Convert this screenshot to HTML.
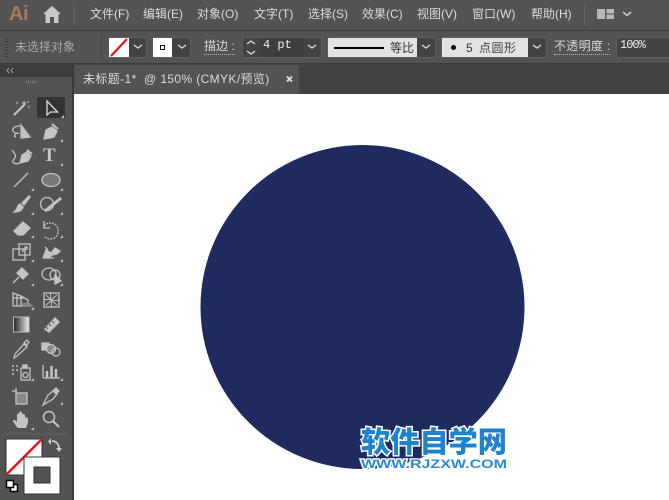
<!DOCTYPE html>
<html><head><meta charset="utf-8">
<style>
html,body{margin:0;padding:0;background:#fff}
#p{position:relative;width:669px;height:500px;overflow:hidden;background:#fff;font-family:"Liberation Sans","Noto Sans CJK SC",sans-serif}
#p div,#p span.a{position:absolute;box-sizing:border-box}
.m{top:6px;font-size:12px;line-height:16px;color:#dcdcdc;white-space:nowrap}
.l{font-size:12px;line-height:16px;color:#d8d8d8;white-space:nowrap}
.b{background:#434343;border:1px solid #5e5e5e;border-radius:3px}
</style></head><body><div id="p">
<div style="left:0;top:0;width:669px;height:30px;background:#535353"></div>
<div style="left:0;top:30px;width:669px;height:34px;background:#535353;border-top:1px solid #3c3c3c;border-bottom:1px solid #3a3a3a"></div>
<div style="left:0;top:64px;width:669px;height:30px;background:#424242"></div>
<div style="left:0;top:65px;width:72px;height:435px;background:#535353"></div>
<div style="left:0;top:65px;width:72px;height:12px;background:#3d3d3d"></div>
<div style="left:72px;top:64px;width:2px;height:436px;background:#3a3a3a"></div>
<div style="left:74px;top:65px;width:225px;height:29px;background:#535353"></div>
<div style="left:74px;top:94px;width:595px;height:406px;background:#fff"></div>

<div style="left:9px;top:-1px;font:bold 20px/30px 'Liberation Sans',sans-serif;color:#ab7858;letter-spacing:-0.5px">Ai</div>
<div style="left:74px;top:5px;width:1px;height:20px;background:#666"></div>
<div class="m" style="left:90px">文件(F)</div>
<div class="m" style="left:143px">编辑(E)</div>
<div class="m" style="left:197px">对象(O)</div>
<div class="m" style="left:254px">文字(T)</div>
<div class="m" style="left:308px">选择(S)</div>
<div class="m" style="left:362px">效果(C)</div>
<div class="m" style="left:417px">视图(V)</div>
<div class="m" style="left:472px">窗口(W)</div>
<div class="m" style="left:531px">帮助(H)</div>
<div style="left:584px;top:5px;width:1px;height:20px;background:#666"></div>

<div class="l" style="left:15px;top:39px;color:#a8a8a8">未选择对象</div>
<div style="left:101px;top:35px;width:1px;height:24px;background:#444"></div>

<div class="b" style="left:109px;top:37px;width:38px;height:21px"></div>
<div style="left:109px;top:38px;width:20px;height:19px;background:#fff"></div>
<div class="b" style="left:153px;top:37px;width:38px;height:21px"></div>
<div style="left:153px;top:38px;width:19px;height:19px;background:#fff"></div>
<div style="left:160px;top:45px;width:5px;height:5px;border:1px solid #111"></div>

<div class="l" style="left:204px;top:39px;border-bottom:1px dotted #bbb;line-height:15px">描边 :</div>
<div class="b" style="left:242px;top:37px;width:80px;height:21px"></div>
<div style="left:260px;top:38px;width:44px;height:19px;background:#3e3e3e"></div>
<div style="left:263px;top:38px;font:12px/15px 'Liberation Mono',monospace;color:#eee">4 pt</div>

<div class="b" style="left:327px;top:37px;width:109px;height:21px"></div>
<div style="left:328px;top:38px;width:89px;height:19px;background:#e3e3e3"></div>
<div style="left:334px;top:47px;width:50px;height:2px;background:#000"></div>
<div class="l" style="left:390px;top:40px;color:#333">等比</div>

<div class="b" style="left:441px;top:37px;width:106px;height:21px"></div>
<div style="left:442px;top:38px;width:86px;height:19px;background:#e3e3e3"></div>
<div style="left:451px;top:45px;width:5px;height:5px;border-radius:50%;background:#000"></div>
<div class="l" style="left:466px;top:40px;color:#333">5</div>
<div class="l" style="left:479px;top:40px;color:#444;letter-spacing:.5px">点圆形</div>

<div class="l" style="left:554px;top:39px;border-bottom:1px dotted #bbb;line-height:15px;letter-spacing:.3px">不透明度 :</div>
<div class="b" style="left:616px;top:37px;width:60px;height:21px;background:#434343"></div>
<div style="left:620px;top:38px;font:12px/15px 'Liberation Mono',monospace;color:#eee;letter-spacing:-1px">100%</div>

<div style="left:83px;top:71px;font-size:12px;line-height:16px;color:#dcdcdc;white-space:nowrap;letter-spacing:.38px">未标题-1*&nbsp; @ 150% (CMYK/预览)</div>

<div style="left:43px;top:146px;font:bold 19px/20px 'Liberation Serif',serif;color:#c4c4c4">T</div>

<svg style="position:absolute;left:0;top:0" width="669" height="500" viewBox="0 0 669 500">
<defs><linearGradient id="g" x1="0" x2="1" y1="0" y2="0"><stop offset="0" stop-color="#222"/><stop offset="1" stop-color="#eee"/></linearGradient></defs>
<circle cx="362.5" cy="307" r="162" fill="#1f2a5f"/>

<!-- home -->
<path d="M43 14L52 6l9 8h-2.500v9h-4.500v-6h-4v6h-4.500v-9z" fill="#c8c8c8"/>
<!-- workspace -->
<rect x="597" y="9" width="8" height="10" fill="#b8b8b8"/>
<rect x="606.500" y="9" width="7.500" height="4.500" fill="#b8b8b8"/><rect x="606.500" y="14.500" width="7.500" height="4.500" fill="#b8b8b8"/>
<path d="M623 12l4 3.500 4-3.500" fill="none" stroke="#ccc" stroke-width="1.500"/>

<!-- gripper -->
<g fill="#3f3f3f"><rect x="5" y="38" width="3" height="1"/><rect x="5" y="41" width="3" height="1"/><rect x="5" y="44" width="3" height="1"/><rect x="5" y="47" width="3" height="1"/><rect x="5" y="50" width="3" height="1"/><rect x="5" y="53" width="3" height="1"/><rect x="5" y="56" width="3" height="1"/></g>

<!-- fill none swatch -->
<path d="M111 56L127 39" stroke="#e8111b" stroke-width="2.200"/>
<g fill="none" stroke="#ddd" stroke-width="1.300">
<path d="M134 45l4 3 4-3"/><path d="M178 45l4 3 4-3"/>
<path d="M247 44l4-3 4 3M247 51l4 3 4-3"/>
<path d="M308 45l4 3 4-3"/><path d="M422 45l4 3 4-3"/><path d="M533 45l4 3 4-3"/>
</g>
<!-- tab x -->
<path d="M287 76.500l5 5M292 76.500l-5 5" stroke="#e4e4e4" stroke-width="1.800"/>
<!-- panel collapse -->
<path d="M9 68l-2 2.500 2 2.500M13 68l-2 2.500 2 2.500" fill="none" stroke="#aaa" stroke-width="1"/>
<path d="M26 82h11" stroke="#777" stroke-width="3" stroke-dasharray="1 1"/>

<!-- selected tool -->
<rect x="37" y="97" width="28" height="21" rx="2" fill="#333"/>

<g fill="none" stroke="#c4c4c4" stroke-width="1.300">
<!-- wand -->
<path d="M14 115l11-11" stroke-width="2"/><path d="M24 101v4M22 103h4M28 101v2M16 103h2M28 107h2" stroke-width="1"/>
<!-- direct select -->
<path d="M47 101v14l3.500-3h7z" stroke="#ddd"/>
<!-- lasso select -->
<path d="M20 126c-5 0-8 2-7 5 1 2 4 3 6 2M16 134c-2 1-2 3 0 3"/>
<path d="M21 125v13l9-1z" fill="#c4c4c4"/>
<!-- pen -->
<path d="M44 139l2-9 6-3 5 4-3 6z" fill="#c4c4c4"/><path d="M52 124l6 5" stroke-width="2"/>
<!-- curvature -->
<path d="M20 163l2-8 5-3 4 4-3 5z" fill="#c4c4c4"/><path d="M27 150l5 4" stroke-width="2"/><path d="M20 163c-6 2-9-1-6-4 3-3 1-5-2-9"/>
<!-- line -->
<path d="M14 187l14-14"/>
<!-- ellipse -->
<ellipse cx="51" cy="180" rx="9" ry="6.500" fill="#777"/>
<!-- brush -->
<path d="M22 203l7-7 1 1-6 8z" fill="#c4c4c4"/><path d="M14 212c4 0 8-1 9-5l-3-3c-3 1-2 5-6 8z" fill="#c4c4c4"/>
<!-- blob -->
<circle cx="47" cy="204" r="6.500"/><path d="M45 211l16-13" stroke-width="3"/>
<!-- eraser -->
<path d="M14 231l9-9 7 6-7 7h-5z" fill="#c4c4c4"/>
<!-- rotate -->
<path d="M44 226a8 8 0 1 1 1 11" stroke-dasharray="2 1"/><path d="M44 221v7h6"/>
<!-- scale -->
<rect x="13" y="249" width="12" height="11"/><rect x="19" y="244" width="11" height="11"/><path d="M22 252l5-5M24 247h3v3"/>
<!-- warp -->
<path d="M43 258l3-8 5 3 4-5 5 3-3 3-5 1-3 3z" fill="#c4c4c4"/><path d="M45 247l3 3M48 258h6"/>
<!-- pin -->
<path d="M17 273l5-5 6 6-5 5zM19 277l-6 6" fill="#c4c4c4"/>
<!-- shape builder -->
<ellipse cx="49" cy="274" rx="7" ry="6"/><circle cx="55" cy="275" r="5"/>
<path d="M55 275v9l6-3z" fill="#c4c4c4"/>
<!-- perspective -->
<path d="M13 293l8 3 7 4v6h-15zM13 298h12M17 294v12M21 296v10"/>
<path d="M22 303h8l3 4H22z" fill="#888" stroke="none"/>
<!-- mesh -->
<rect x="44" y="293" width="15" height="14"/><path d="M44 300c5-2 10 2 15 0M51 293c-2 5 2 9 0 14M46 295l5 5M57 295l-6 5M46 305l5-4M57 305l-5-4" stroke-width="1"/>
<!-- gradient -->
<rect x="13.500" y="317" width="15.500" height="15" fill="url(#g)" stroke="#bbb" stroke-width="1"/>
<!-- ruler -->
<path d="M44 329l11-12 5 5-11 11z" fill="#c4c4c4" stroke="none"/>
<path d="M49 324l2 2M52 321l2 2M46 327l2 2" stroke="#535353" stroke-width="1"/>
<!-- eyedropper -->
<path d="M15 354l9-10 3 3-10 9-3 2zM24 343l3-3 2 2-2 3z"/>
<!-- blend -->
<rect x="42" y="343" width="7" height="7" fill="#c4c4c4"/><circle cx="51" cy="349" r="4.500" fill="#888"/><circle cx="56" cy="352" r="4"/>
<!-- symbol sprayer -->
<rect x="21" y="368" width="9" height="12"/><circle cx="25.500" cy="375" r="2.500"/><rect x="23" y="365" width="4" height="3" fill="#c4c4c4"/>
<path d="M12 366h2M16 366h2M12 370h2M16 370h2M12 374h2" stroke-width="1.500"/>
<!-- graph -->
<path d="M43 378h17M43 365v13"/><path d="M47 378v-7M51.500 378v-12M56 378v-9" stroke-width="2.500"/>
<!-- artboard -->
<path d="M12 391h5M16 388v5"/><rect x="16" y="393" width="11" height="11" fill="#888"/>
<!-- slice knife -->
<path d="M43 405l5-10 5-4 4 3-4 5z"/><path d="M53 391l3-3 3 3-3 3z" fill="#c4c4c4"/>
<!-- hand -->
<path d="M16 426l-3-5c0-2 2-1 3 0l1 1v-7c0-2 2-2 2 0v-2c0-2 3-2 3 0v2c0-2 3-1 3 0v3c0-1 3-1 3 1v4l-2 5h-8z" fill="#c4c4c4" stroke="none"/>
<!-- zoom -->
<circle cx="49" cy="417" r="5.500" stroke-width="1.500"/><path d="M53 421l6 6" stroke-width="2"/>
</g>
<!-- corner triangles -->
<g fill="#c4c4c4">
<path d="M64 115v3h-3z"/><path d="M63 139v3h-3z"/><path d="M63 163v3h-3z"/><path d="M34 188v3h-3z"/><path d="M63 188v3h-3z"/><path d="M34 212v3h-3z"/><path d="M63 212v3h-3z"/><path d="M34 235v3h-3z"/><path d="M63 235v3h-3z"/><path d="M34 259v3h-3z"/><path d="M63 259v3h-3z"/><path d="M34 283v3h-3z"/><path d="M63 283v3h-3z"/><path d="M34 307v3h-3z"/><path d="M34 378v3h-3z"/><path d="M63 378v3h-3z"/><path d="M63 402v3h-3z"/><path d="M34 427v3h-3z"/>
</g>
<path d="M6 434h60" stroke="#626262"/>
<!-- fill / stroke -->
<rect x="6" y="439" width="36" height="36" fill="#fff" stroke="#333"/>
<path d="M7 474L41 440" stroke="#f0101a" stroke-width="2.500"/>
<rect x="24" y="457" width="36" height="37" fill="#fff" stroke="#333"/>
<rect x="34" y="467" width="16" height="16" fill="#535353" stroke="#333"/>
<path d="M52 441c3 0 7 2 7 8" fill="none" stroke="#ccc" stroke-width="1.800"/><path d="M51 445v-7l-3 3.500zM56 448h6l-3 4z" fill="#ccc"/>
<rect x="10.500" y="484.500" width="7" height="7" fill="#fff" stroke="#000" stroke-width="1.500"/><rect x="6.500" y="480.500" width="7" height="7" fill="#fff" stroke="#000" stroke-width="1.500"/>

<!-- watermark -->
<text x="361" y="452" font-family="'Noto Sans CJK SC',sans-serif" font-weight="900" font-size="29" fill="#1e83cf" stroke="#fff" stroke-width="3" paint-order="stroke" textLength="146" lengthAdjust="spacingAndGlyphs">软件自学网</text>
<text x="361" y="468" font-family="'Liberation Sans',sans-serif" font-weight="700" font-size="12" fill="#2a8ad4" stroke="#fff" stroke-width="2.500" paint-order="stroke" textLength="146" lengthAdjust="spacingAndGlyphs">WWW.RJZXW.COM</text>
</svg>
</div></body></html>
